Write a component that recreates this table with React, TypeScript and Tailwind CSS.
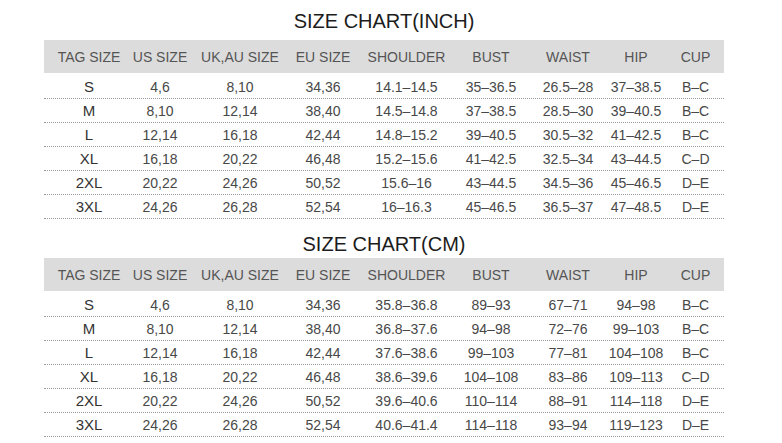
import React from 'react';

type Row = string[];

const headers = ['TAG SIZE', 'US SIZE', 'UK,AU SIZE', 'EU SIZE', 'SHOULDER', 'BUST', 'WAIST', 'HIP', 'CUP'];

const inchRows: Row[] = [
  ['S', '4,6', '8,10', '34,36', '14.1–14.5', '35–36.5', '26.5–28', '37–38.5', 'B–C'],
  ['M', '8,10', '12,14', '38,40', '14.5–14.8', '37–38.5', '28.5–30', '39–40.5', 'B–C'],
  ['L', '12,14', '16,18', '42,44', '14.8–15.2', '39–40.5', '30.5–32', '41–42.5', 'B–C'],
  ['XL', '16,18', '20,22', '46,48', '15.2–15.6', '41–42.5', '32.5–34', '43–44.5', 'C–D'],
  ['2XL', '20,22', '24,26', '50,52', '15.6–16', '43–44.5', '34.5–36', '45–46.5', 'D–E'],
  ['3XL', '24,26', '26,28', '52,54', '16–16.3', '45–46.5', '36.5–37', '47–48.5', 'D–E'],
];

const cmRows: Row[] = [
  ['S', '4,6', '8,10', '34,36', '35.8–36.8', '89–93', '67–71', '94–98', 'B–C'],
  ['M', '8,10', '12,14', '38,40', '36.8–37.6', '94–98', '72–76', '99–103', 'B–C'],
  ['L', '12,14', '16,18', '42,44', '37.6–38.6', '99–103', '77–81', '104–108', 'B–C'],
  ['XL', '16,18', '20,22', '46,48', '38.6–39.6', '104–108', '83–86', '109–113', 'C–D'],
  ['2XL', '20,22', '24,26', '50,52', '39.6–40.6', '110–114', '88–91', '114–118', 'D–E'],
  ['3XL', '24,26', '26,28', '52,54', '40.6–41.4', '114–118', '93–94', '119–123', 'D–E'],
];

// fixed columns so every cell centres where the chart has it
const gridCols = 'grid w-[680px] grid-cols-[10px_70px_72px_88px_78px_89px_80px_74px_62px_57px]';

const SizeTable: React.FC<{ rows: Row[] }> = ({ rows }) => (
  <div className="ml-[44px] w-[680px]">
    <div className={`${gridCols} h-[33px] items-center bg-[#dcdcdc] pt-[2px] text-[14px] text-[#555]`}>
      <span />
      {headers.map((h) => (
        <span key={h} className="text-center whitespace-nowrap">{h}</span>
      ))}
    </div>
    {rows.map((row, i) => (
      <div
        key={row[0]}
        className={`${gridCols} items-center border-b border-dotted border-[#9a9a9a] text-[14px] text-[#484848] ${
          i === 0 ? 'h-[26px] pt-[3px]' : 'h-[24px] pt-[1px]'
        }`}
      >
        <span />
        {row.map((cell, j) => (
          <span key={j} className={`text-center whitespace-nowrap ${j === 0 ? 'text-[15px] text-[#333]' : ''}`}>
            {cell}
          </span>
        ))}
      </div>
    ))}
  </div>
);

export default function App() {
  return (
    <div className="w-[782px] h-[443px] overflow-hidden bg-white font-['Liberation_Sans',Arial,sans-serif]">
      <div className="ml-[44px] w-[680px] h-[40px] pt-[2px] text-center text-[20px] leading-[38px] text-[#1c1c1c]">
        SIZE CHART(INCH)
      </div>
      <SizeTable rows={inchRows} />
      <div className="ml-[44px] w-[680px] h-[39px] pt-[11px] text-center text-[20px] leading-[28px] text-[#1c1c1c]">
        SIZE CHART(CM)
      </div>
      <SizeTable rows={cmRows} />
    </div>
  );
}
